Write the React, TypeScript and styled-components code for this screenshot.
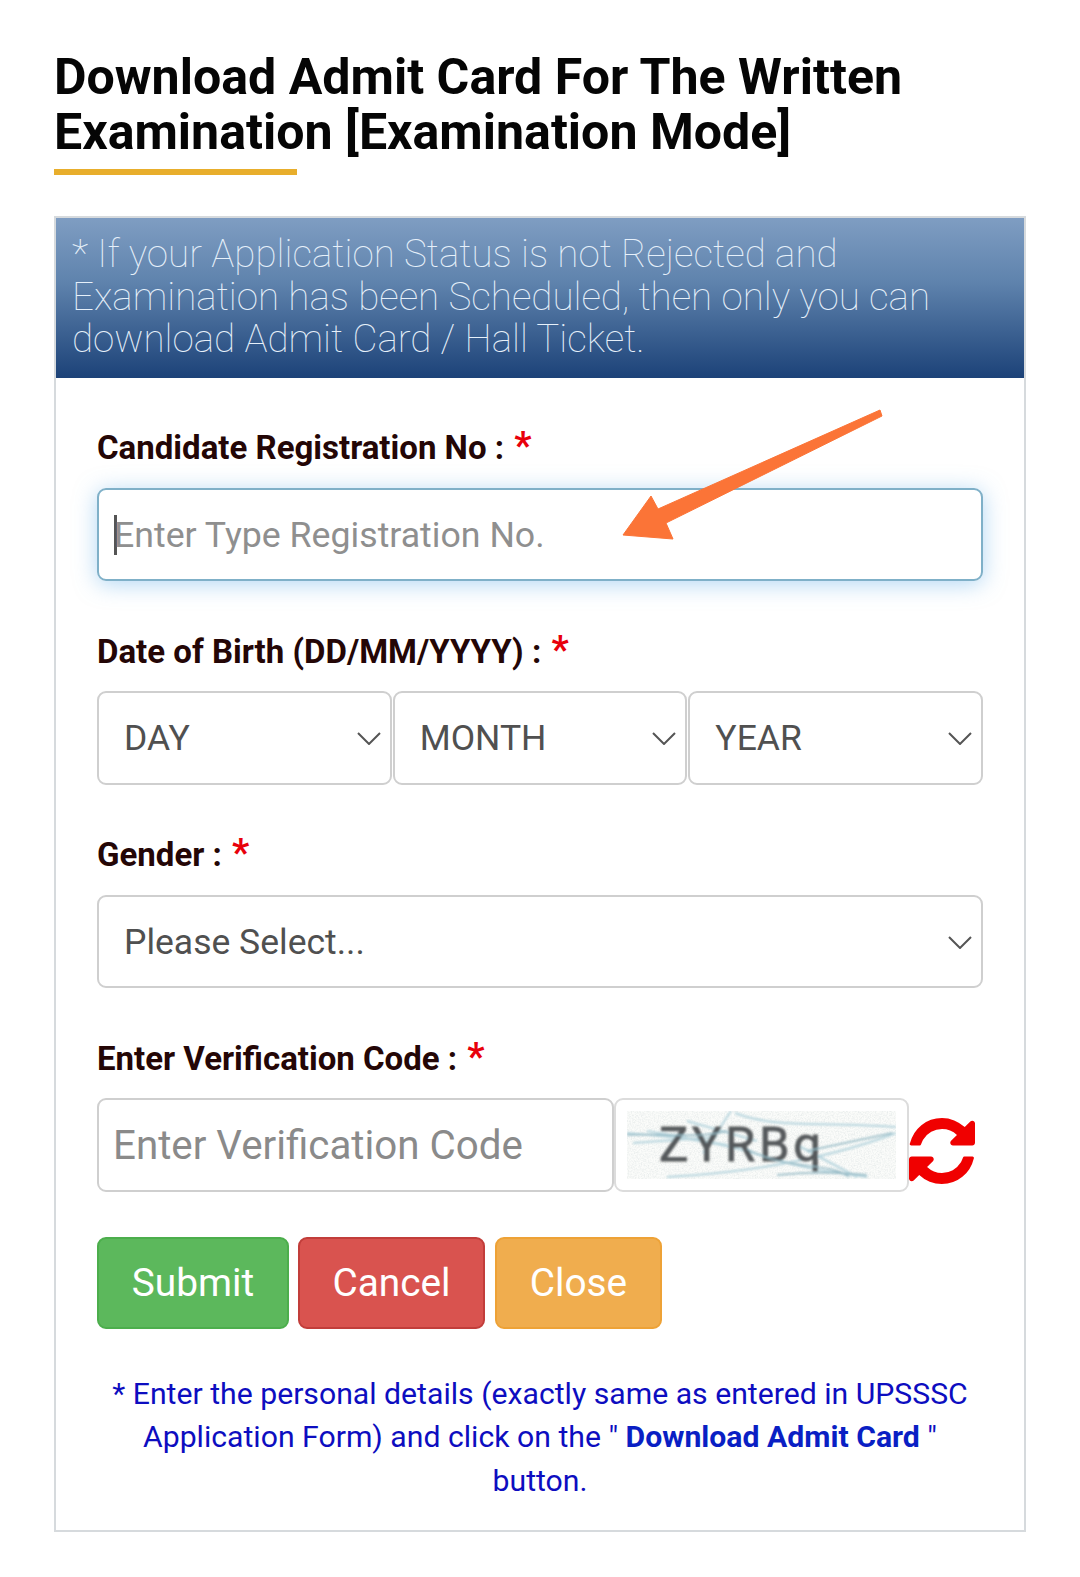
import React from "react";
import styled, { createGlobalStyle } from "styled-components";

const Global = createGlobalStyle`
  html, body { margin: 0; padding: 0; background: #fff; }
  body { font-family: Roboto, "Liberation Sans", sans-serif; }
  * { box-sizing: border-box; }
`;

const Page = styled.div`
  position: relative;
  width: 1080px;
  height: 1577px;
  padding: 50px 54px 0 54px;
  overflow: hidden;
`;

const Title = styled.h1`
  margin: 0;
  font-size: 50.1px;
  line-height: 55px;
  font-weight: 700;
  color: #050505;
`;

const Underline = styled.div`
  width: 243px;
  height: 6px;
  margin-top: 9px;
  background: #e8ae2c;
`;

const Panel = styled.section`
  margin-top: 41px;
  border: 2px solid #d6dadd;
  height: 1316px;
`;

const Banner = styled.div`
  height: 160px;
  padding: 15px 16px 0 16px;
  background: linear-gradient(to bottom, #7f9dc2 0%, #5f83ad 40%, #1c4278 100%);
  font-size: 38.55px;
  line-height: 42.6px;
  font-weight: 100;
  color: #e6f0fa;
`;

const Form = styled.div`
  padding: 46px 41px 0 41px;
  display: flex;
  flex-direction: column;
`;

const Label = styled.label<{ $top?: number }>`
  display: block;
  height: 44px;
  margin-top: ${(p) => p.$top ?? 0}px;
  font-size: 33px;
  line-height: 44px;
  font-weight: 700;
  color: #240606;
  white-space: nowrap;
`;

const Star = styled.span`
  color: #e8000b;
  font-size: 38px;
  margin-left: 2px;
`;

const FocusInput = styled.div`
  margin-top: 20px;
  height: 93px;
  display: flex;
  align-items: center;
  padding-left: 15px;
  border: 2px solid #7fb0c8;
  border-radius: 9px;
  box-shadow: 0 3px 22px rgba(102, 175, 233, 0.5);
  font-size: 35.7px;
  color: #8f8f8f;
`;

const Caret = styled.span`
  width: 3px;
  height: 40px;
  background: #555;
  margin-right: -3px;
`;

const DateRow = styled.div`
  margin-top: 19px;
  display: grid;
  grid-template-columns: repeat(3, 1fr);
  column-gap: 1px;
`;

const SelectBox = styled.div`
  position: relative;
  height: 94px;
  display: flex;
  align-items: center;
  padding-left: 25px;
  border: 2px solid #cfcfcf;
  border-radius: 9px;
  font-size: 35.5px;
  color: #505050;
`;

const GenderBox = styled(SelectBox)`
  height: 93px;
  margin-top: 20px;
`;

const Chevron = styled.svg`
  position: absolute;
  right: 9px;
  top: 38px;
  width: 24px;
  height: 14px;
  fill: none;
  stroke: #555;
  stroke-width: 2;
`;

const CaptchaRow = styled.div`
  margin-top: 19px;
  display: flex;
  align-items: flex-start;
`;

const CodeInput = styled.div`
  width: 517px;
  height: 94px;
  display: flex;
  align-items: center;
  padding-left: 14px;
  border: 2px solid #cfcfcf;
  border-radius: 9px;
  font-size: 40.3px;
  color: #8a8a8a;
`;

const CaptchaBox = styled.div`
  width: 295px;
  height: 94px;
  display: flex;
  align-items: center;
  justify-content: center;
  border: 2px solid #dcdcdc;
  border-radius: 9px;
`;

const CaptchaArt = styled.svg`
  width: 269px;
  height: 68px;
`;

const Refresh = styled.svg`
  margin: 20px 0 0 0;
  width: 66px;
  height: 66px;
  fill: #f00000;
`;

const Buttons = styled.div`
  margin-top: 45px;
  display: flex;
`;

const Button = styled.div<{ $bg: string; $edge: string; $w: number; $gap: number }>`
  width: ${(p) => p.$w}px;
  height: 92px;
  margin-right: ${(p) => p.$gap}px;
  padding-bottom: 2px;
  display: flex;
  align-items: center;
  justify-content: center;
  background: ${(p) => p.$bg};
  border: 2px solid ${(p) => p.$edge};
  border-radius: 9px;
  color: #fff;
  font-size: 38.8px;
`;

const Note = styled.p`
  margin: 43px 0 0;
  text-align: center;
  font-size: 30.2px;
  line-height: 43.3px;
  color: #0d0dc0;
`;

const Strong = styled.b`
  color: #0a1fc4;
`;

const Arrow = styled.svg`
  position: absolute;
  left: 0;
  top: 0;
  width: 1080px;
  height: 1577px;
  pointer-events: none;
`;

const chevron = (
  <Chevron viewBox="0 0 24 14">
    <path d="M1 2 L12 13 L23 2" />
  </Chevron>
);

export default function App() {
  return (
    <Page>
      <Global />
      <Title>
        Download Admit Card For The Written
        <br />
        Examination [Examination Mode]
      </Title>
      <Underline />
      <Panel>
        <Banner>
          * If your Application Status is not Rejected and Examination has been Scheduled, then only you can download Admit Card / Hall Ticket.
        </Banner>
        <Form>
          <Label>
            Candidate Registration No : <Star>*</Star>
          </Label>
          <FocusInput>
            <Caret />
            Enter Type Registration No.
          </FocusInput>
          <Label $top={47}>
            Date of Birth (DD/MM/YYYY) : <Star>*</Star>
          </Label>
          <DateRow>
            <SelectBox>DAY{chevron}</SelectBox>
            <SelectBox>MONTH{chevron}</SelectBox>
            <SelectBox>YEAR{chevron}</SelectBox>
          </DateRow>
          <Label $top={46}>
            Gender : <Star>*</Star>
          </Label>
          <GenderBox>Please Select...{chevron}</GenderBox>
          <Label $top={47}>
            Enter Verification Code : <Star>*</Star>
          </Label>
          <CaptchaRow>
            <CodeInput>Enter Verification Code</CodeInput>
            <CaptchaBox>
              <CaptchaArt viewBox="0 0 269 68">
                <defs>
                  <filter id="grain" x="0" y="0" width="100%" height="100%">
                    <feTurbulence type="fractalNoise" baseFrequency="0.7" numOctaves="2" seed="4" />
                    <feColorMatrix type="matrix" values="0 0 0 0 0.76  0 0 0 0 0.8  0 0 0 0 0.8  1.6 0 0 0 -0.6" />
                  </filter>
                  <filter id="soft">
                    <feGaussianBlur stdDeviation="0.9" />
                  </filter>
                </defs>
                <rect x="0" y="0" width="269" height="68" fill="#fbfcfa" />
                <rect x="0" y="0" width="269" height="68" filter="url(#grain)" />
                <g filter="url(#soft)">
                  <g fill="none" stroke="#b7d5de" strokeWidth="2">
                    <path d="M0 22 C50 26 90 30 140 46 S220 62 240 66" />
                    <path d="M104 0 L76 42 M108 2 C150 18 190 10 269 16" />
                    <path d="M40 66 C110 62 190 52 269 22" />
                    <path d="M170 34 L230 66 M6 32 L90 26" />
                    <path d="M20 20 L100 34 M60 10 L130 30" />
                  </g>
                  <text x="32" y="50" fontFamily="Roboto, sans-serif" fontSize="49" fill="#55595b" stroke="#55595b" strokeWidth="0.8" textLength="162">ZYRBq</text>
                  <g fill="none" stroke="#8fb6c2" strokeWidth="1.4">
                    <path d="M0 24 C40 22 70 28 100 20 M120 38 C160 60 200 50 222 66 M180 40 L265 22" />
                    <path d="M150 64 C190 60 215 62 240 64" />
                  </g>
                </g>
              </CaptchaArt>
            </CaptchaBox>
            <Refresh viewBox="128 128 1536 1536">
              <path d="M1639 1056q0 5-1 7-64 268-268 434.5t-478 166.5q-146 0-282.5-55t-243.5-157l-129 129q-19 19-45 19t-45-19-19-45v-448q0-26 19-45t45-19h448q26 0 45 19t19 45-19 45l-137 137q71 66 161 102t187 36q134 0 250-65t186-179q11-17 53-117 8-23 30-23h192q13 0 22.5 9.5t9.5 22.5zm25-800v448q0 26-19 45t-45 19h-448q-26 0-45-19t-19-45 19-45l138-138q-148-137-349-137-134 0-250 65t-186 179q-11 17-53 117-8 23-30 23h-199q-13 0-22.5-9.5t-9.5-22.5v-7q65-268 270-434.5t480-166.5q146 0 284 55.500t245 156.500l130-129q19-19 45-19t45 19 19 45z" />
            </Refresh>
          </CaptchaRow>
          <Buttons>
            <Button $bg="#5cb85c" $edge="#4cae4c" $w={192} $gap={9}>Submit</Button>
            <Button $bg="#d9534f" $edge="#c23d3a" $w={187} $gap={10}>Cancel</Button>
            <Button $bg="#f0ad4e" $edge="#eea236" $w={167} $gap={0}>Close</Button>
          </Buttons>
          <Note>
            * Enter the personal details (exactly same as entered in UPSSSC Application Form) and click on the " <Strong>Download Admit Card</Strong> " button.
          </Note>
        </Form>
      </Panel>
      <Arrow viewBox="0 0 1080 1577">
        <polygon points="880,410 882,416 666,523 673,539 623,535 651,496 658,509" fill="#fb7437" stroke="#fb7437" strokeWidth="1" />
      </Arrow>
    </Page>
  );
}
